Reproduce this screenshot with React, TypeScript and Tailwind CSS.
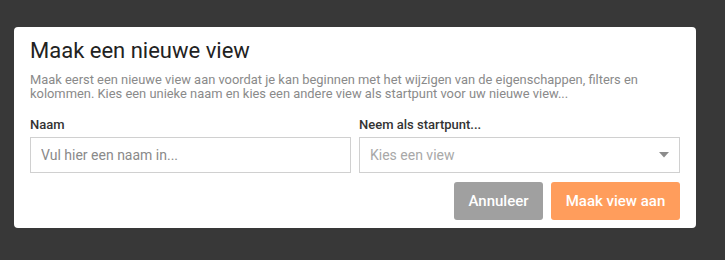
import { useState } from "react";

// Dialoog: nieuwe view aanmaken
export default function App() {
  const [name, setName] = useState("");
  const [start, setStart] = useState("");

  return (
    <div
      className="min-h-[260px] w-full bg-[#383838] px-[14px] pt-[27px]"
      style={{ fontFamily: "Roboto, 'Noto Sans', sans-serif" }}
    >
      <div className="w-[682px] rounded-[4px] bg-white px-4 pb-2 pt-[9px]">
        <h1 className="text-[22px] leading-[30px] font-normal text-[#222]">Maak een nieuwe view</h1>
        <p className="mt-[7px] text-[12.9px] leading-[14px] text-[#8a8a8a]">
          Maak eerst een nieuwe view aan voordat je kan beginnen met het wijzigen van de eigenschappen, filters en
          kolommen. Kies een unieke naam en kies een andere view als startpunt voor uw nieuwe view...
        </p>

        <div className="mt-[15px] grid grid-cols-2 gap-2">
          <div>
            <label className="block text-[13px] leading-[18px] font-medium text-[#333]">Naam</label>
            <input
              value={name}
              onChange={(e) => setName(e.target.value)}
              placeholder="Vul hier een naam in..."
              className="mt-[3px] h-9 w-full border border-[#d0d0d0] px-[10px] text-[14px] text-[#333] placeholder:text-[#8a8a8a] outline-none"
            />
          </div>
          <div>
            <label className="block text-[13px] leading-[18px] font-medium text-[#333]">Neem als startpunt...</label>
            <div className="relative mt-[3px]">
              <select
                value={start}
                onChange={(e) => setStart(e.target.value)}
                className="h-9 w-full appearance-none border border-[#d0d0d0] bg-white px-[10px] text-[14px] text-[#a8a8a8] outline-none"
              >
                <option value="">Kies een view</option>
              </select>
              <svg
                className="pointer-events-none absolute right-[11px] top-[15px]"
                width="10"
                height="6"
                viewBox="0 0 10 6"
              >
                <path d="M0 0 L10 0 L5 5.5 Z" fill="#8c8c8c" />
              </svg>
            </div>
          </div>
        </div>

        <div className="mt-[9px] flex justify-end gap-2">
          <button
            type="button"
            className="h-[38px] w-[89px] rounded-[3px] bg-[#a0a0a0] text-[15px] font-medium text-white"
          >
            Annuleer
          </button>
          <button
            type="button"
            className="h-[38px] w-[129px] rounded-[3px] bg-[#ff9d5c] text-[15px] font-medium text-white"
          >
            Maak view aan
          </button>
        </div>
      </div>
    </div>
  );
}
